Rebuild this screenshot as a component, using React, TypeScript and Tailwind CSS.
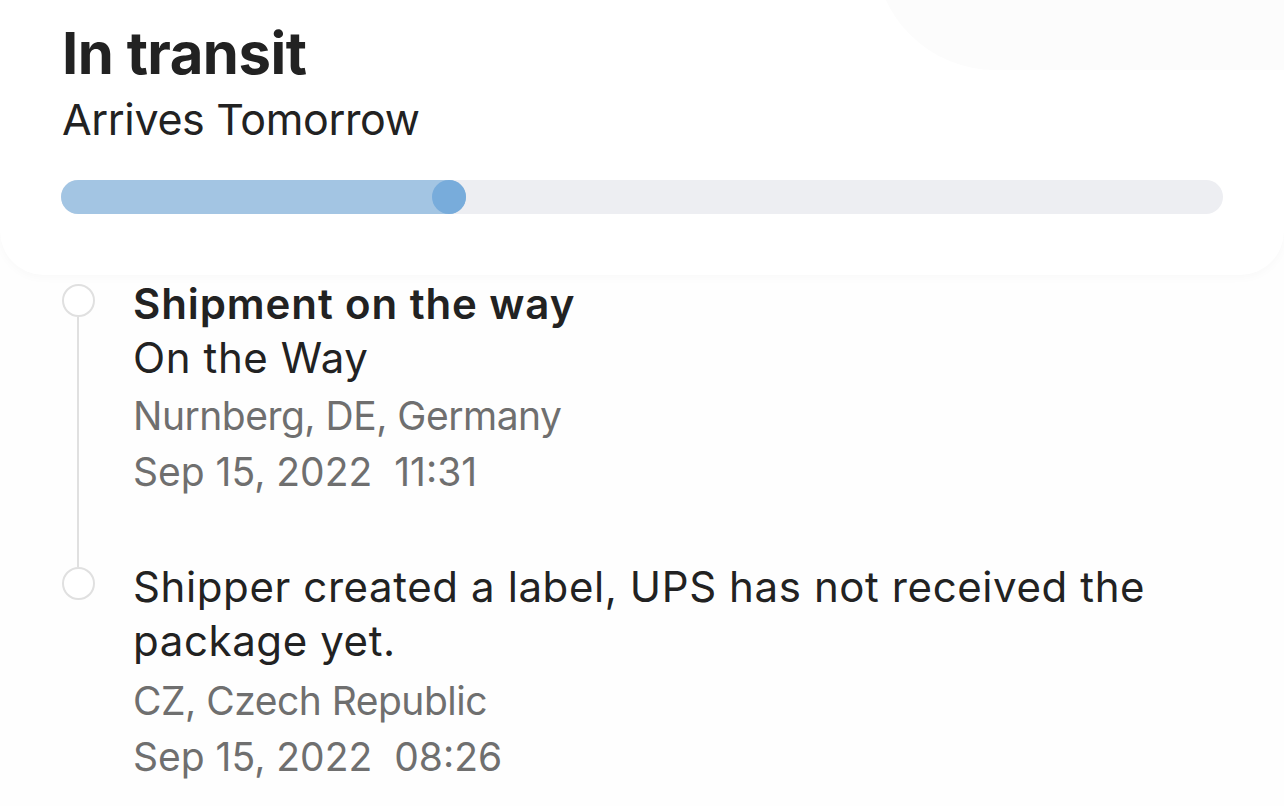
import React from "react"

interface TrackingEvent {
  id: string
  title?: string
  status: string
  location: string
  date: string
}

const events: TrackingEvent[] = [
  {
    id: "1",
    title: "Shipment on the way",
    status: "On the Way",
    location: "Nurnberg, DE, Germany",
    date: "Sep 15, 2022\u00a0\u00a011:31",
  },
  {
    id: "2",
    status: "Shipper created a label, UPS has not received the package yet.",
    location: "CZ, Czech Republic",
    date: "Sep 15, 2022\u00a0\u00a008:26",
  },
]

export default function App() {
  return (
    <div className="min-h-screen bg-[#fefefe] font-['Inter',sans-serif] text-[#222222] overflow-hidden">
      {/* Status card */}
      <div className="relative overflow-hidden bg-white rounded-b-[44px] shadow-[0_3px_10px_rgba(0,0,0,0.025)] px-[61px] pt-[18px] pb-[61px]">
        <div className="absolute left-[875px] top-[-170px] w-[600px] h-[240px] rounded-full bg-[#fcfcfc]" />
        <div className="relative">
          <h1 className="text-[58px] leading-[70px] font-bold tracking-[-0.5px] pl-[1px]">In transit</h1>
          <p className="mt-[5px] text-[43px] leading-[52px] font-normal tracking-[-0.35px] pl-[1px]">Arrives Tomorrow</p>

          <div className="mt-[35px] h-[34px] rounded-full bg-[#edeef2]">
            <div className="relative h-full w-[405px] rounded-full bg-[#a3c5e3]">
              <div className="absolute right-0 top-0 w-[34px] h-[34px] rounded-full bg-[#78acdb]" />
            </div>
          </div>
        </div>
      </div>

      {/* Timeline */}
      <div className="px-[61px] pt-[2px]">
        {events.map((ev, i) => {
          const isFirst = i === 0
          const isLast = i === events.length - 1
          return (
            <div key={ev.id} className="flex">
              <div className="w-[34px] flex flex-col items-center shrink-0">
                <div className={`h-[7px] w-[2px] ${isFirst ? "" : "bg-[#e0e0e0]"}`} />
                <div className="w-[33px] h-[33px] rounded-full border-[2.5px] border-[#e0e0e0] bg-white" />
                {!isLast && <div className="flex-1 w-[2px] bg-[#e0e0e0]" />}
              </div>

              <div className={`ml-[38px] flex-1 min-w-0 ${isLast ? "" : "pb-[60px]"}`}>
                {ev.title && (
                  <p className="text-[42px] leading-[53px] font-semibold tracking-[0.9px]">{ev.title}</p>
                )}
                <p className={`text-[42px] tracking-[0.6px] pr-[40px] ${ev.title ? "leading-[56px]" : "leading-[54px]"}`}>{ev.status}</p>
                <p className={`text-[39px] leading-[56px] tracking-[-0.5px] text-[#6f6f6f] ${ev.title ? "mt-[2px]" : "mt-[5px]"}`}>{ev.location}</p>
                <p className="text-[39px] leading-[56px] text-[#6f6f6f]">{ev.date}</p>
              </div>
            </div>
          )
        })}
      </div>
    </div>
  )
}
